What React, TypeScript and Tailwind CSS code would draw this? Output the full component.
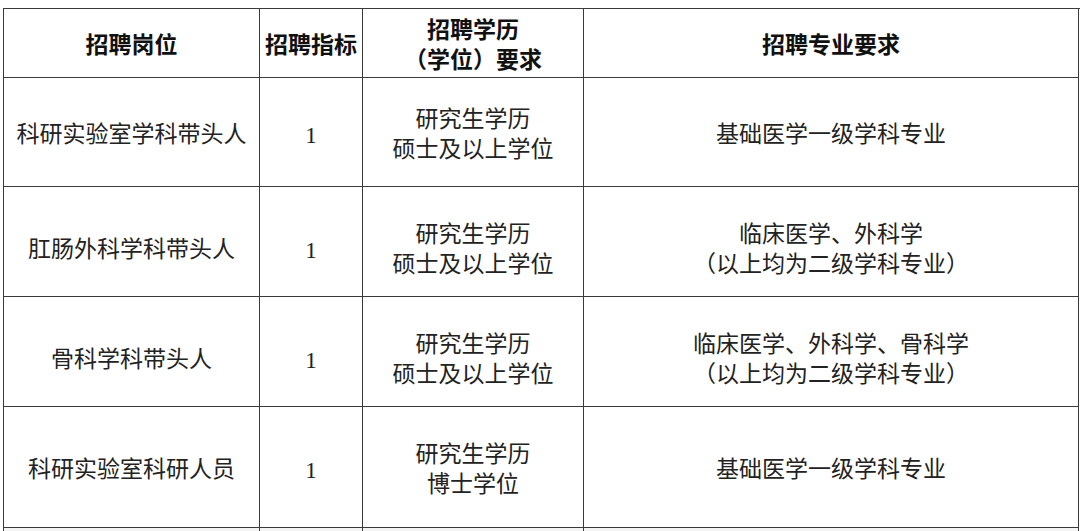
import * as React from "react";

interface Row {
    post: string;
    count: string;
    degree: string[];
    major: string[];
    height: string;
    shift: string;
}

const rows: Row[] = [
    {
        post: "科研实验室学科带头人",
        count: "1",
        degree: ["研究生学历", "硕士及以上学位"],
        major: ["基础医学一级学科专业"],
        height: "h-[109px]",
        shift: "pt-0",
    },
    {
        post: "肛肠外科学科带头人",
        count: "1",
        degree: ["研究生学历", "硕士及以上学位"],
        major: ["临床医学、外科学", "（以上均为二级学科专业）"],
        height: "h-[110px]",
        shift: "pt-[10px]",
    },
    {
        post: "骨科学科带头人",
        count: "1",
        degree: ["研究生学历", "硕士及以上学位"],
        major: ["临床医学、外科学、骨科学", "（以上均为二级学科专业）"],
        height: "h-[110px]",
        shift: "pt-[10px]",
    },
    {
        post: "科研实验室科研人员",
        count: "1",
        degree: ["研究生学历", "博士学位"],
        major: ["基础医学一级学科专业"],
        height: "h-[121px]",
        shift: "pt-0",
    },
];

const cell = "flex flex-col items-center justify-center text-center border-r border-b border-[#3a3a3a]";

const App: React.FC = () => {
    return (
        <div className="w-[1080px] h-[531px] overflow-hidden bg-white pt-[8px] pl-[3px]">
            <div
                className="grid grid-cols-[256px_103px_221px_495px] border-l border-t border-[#3a3a3a] text-[23px] leading-[30px] text-[#222]"
                style={{fontFamily: '"Noto Sans CJK SC", sans-serif'}}
            >
                {/* header */}
                <div className={`${cell} h-[69px] font-bold text-[#111]`}>招聘岗位</div>
                <div className={`${cell} h-[69px] font-bold text-[#111]`}>招聘指标</div>
                <div className={`${cell} h-[69px] font-bold text-[#111]`}>
                    <span>招聘学历</span>
                    <span>（学位）要求</span>
                </div>
                <div className={`${cell} h-[69px] font-bold text-[#111]`}>招聘专业要求</div>

                {rows.map((r, i) => (
                    <React.Fragment key={i}>
                        <div className={`${cell} ${r.height} ${r.shift}`}>{r.post}</div>
                        <div className={`${cell} ${r.height} ${r.shift}`}>
                            <span className="pt-[8px] font-['Liberation_Serif',serif]">{r.count}</span>
                        </div>
                        <div className={`${cell} ${r.height} ${r.shift}`}>
                            {r.degree.map((d) => (
                                <span key={d}>{d}</span>
                            ))}
                        </div>
                        <div className={`${cell} ${r.height} ${r.shift}`}>
                            {r.major.map((m) => (
                                <span key={m}>{m}</span>
                            ))}
                        </div>
                    </React.Fragment>
                ))}

                {/* next row, cut off */}
                <div className={`${cell} h-[40px] bg-[#f4f4f4]`} />
                <div className={`${cell} h-[40px] bg-[#f4f4f4]`} />
                <div className={`${cell} h-[40px] bg-[#f4f4f4]`} />
                <div className={`${cell} h-[40px] bg-[#f4f4f4]`} />
            </div>
        </div>
    );
};

export default App;
